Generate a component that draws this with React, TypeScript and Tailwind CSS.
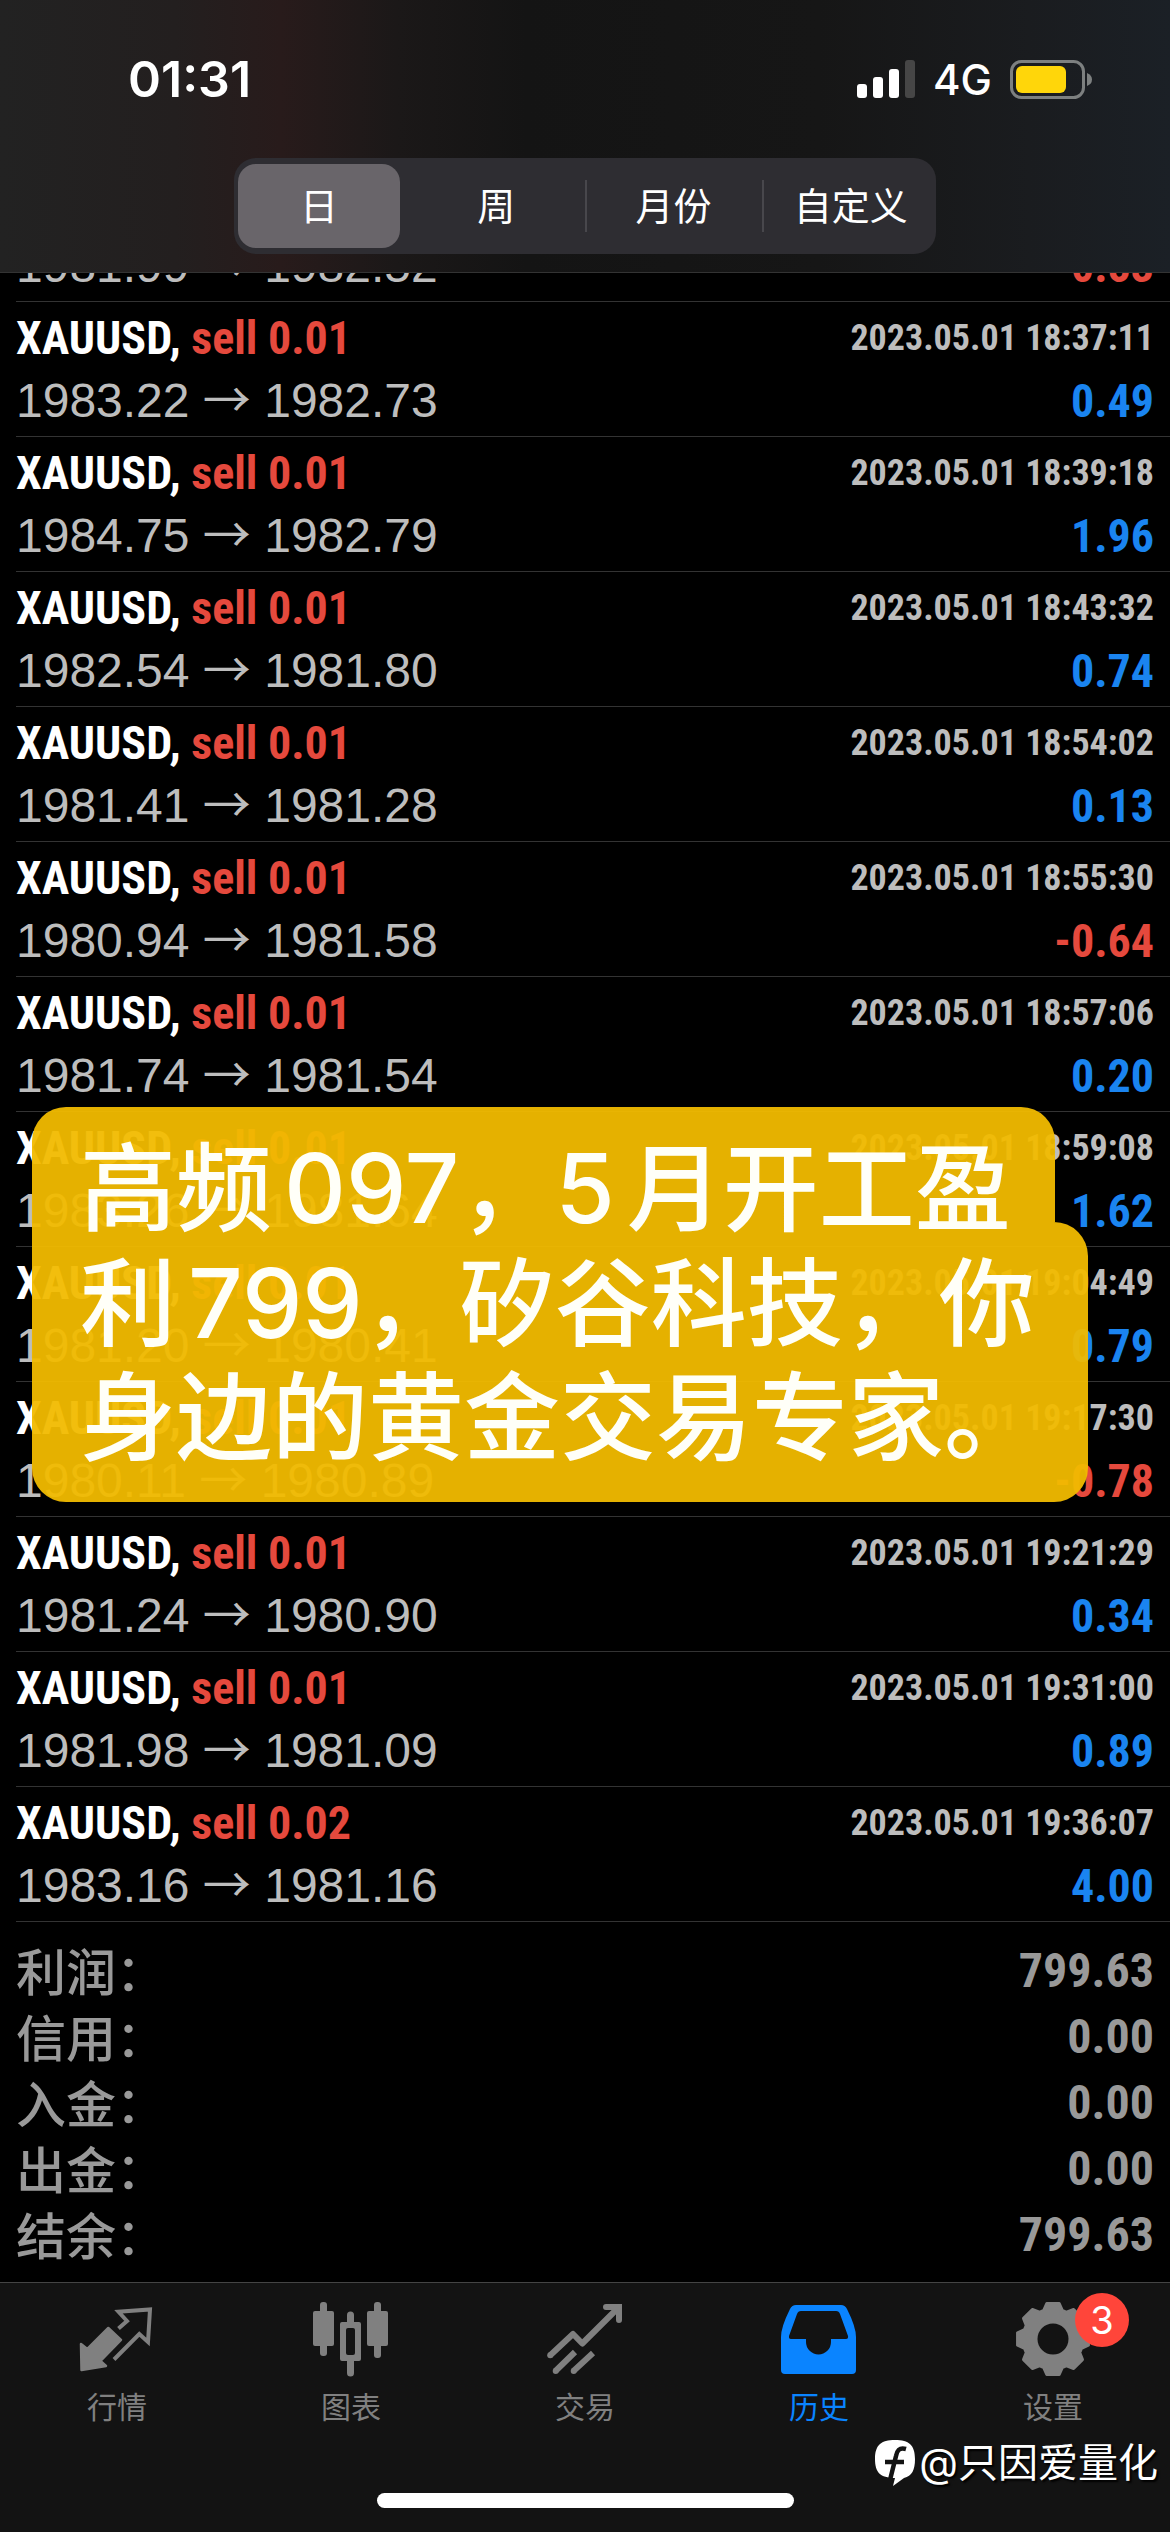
import React, { useState } from 'react';

interface Deal {
  volume: string;
  open: string;
  close: string;
  time: string;
  profit: string;
}

const DEALS: Deal[] = [
  { volume: '0.01', open: '1981.99', close: '1982.52', time: '2023.05.01 18:35:20', profit: '-0.53' },
  { volume: '0.01', open: '1983.22', close: '1982.73', time: '2023.05.01 18:37:11', profit: '0.49' },
  { volume: '0.01', open: '1984.75', close: '1982.79', time: '2023.05.01 18:39:18', profit: '1.96' },
  { volume: '0.01', open: '1982.54', close: '1981.80', time: '2023.05.01 18:43:32', profit: '0.74' },
  { volume: '0.01', open: '1981.41', close: '1981.28', time: '2023.05.01 18:54:02', profit: '0.13' },
  { volume: '0.01', open: '1980.94', close: '1981.58', time: '2023.05.01 18:55:30', profit: '-0.64' },
  { volume: '0.01', open: '1981.74', close: '1981.54', time: '2023.05.01 18:57:06', profit: '0.20' },
  { volume: '0.01', open: '1983.26', close: '1981.64', time: '2023.05.01 18:59:08', profit: '1.62' },
  { volume: '0.01', open: '1981.20', close: '1980.41', time: '2023.05.01 19:04:49', profit: '0.79' },
  { volume: '0.01', open: '1980.11', close: '1980.89', time: '2023.05.01 19:17:30', profit: '-0.78' },
  { volume: '0.01', open: '1981.24', close: '1980.90', time: '2023.05.01 19:21:29', profit: '0.34' },
  { volume: '0.01', open: '1981.98', close: '1981.09', time: '2023.05.01 19:31:00', profit: '0.89' },
  { volume: '0.02', open: '1983.16', close: '1981.16', time: '2023.05.01 19:36:07', profit: '4.00' },
];

const SUMMARY = [
  { label: '利润', value: '799.63' },
  { label: '信用', value: '0.00' },
  { label: '入金', value: '0.00' },
  { label: '出金', value: '0.00' },
  { label: '结余', value: '799.63' },
];

const PERIODS = ['日', '周', '月份', '自定义'];

// Outline of an eight-toothed cog, centred on 38,38
const gearPath = () => {
  const points: string[] = [];
  for (let i = 0; i < 8; i++) {
    for (const [angle, radius] of [[-18, 30], [-10, 36], [10, 36], [18, 30]]) {
      const a = ((i * 45 + angle) * Math.PI) / 180;
      points.push(`${(38 + radius * Math.cos(a)).toFixed(2)} ${(38 + radius * Math.sin(a)).toFixed(2)}`);
    }
  }
  return `M${points.join('L')}Z`;
};

const QuotesIcon = () => (
  <svg viewBox="0 0 76 76" className="size-[76px]" fill="none" stroke="currentColor">
    <path d="M2 43 8.300 48 29.300 27 42 39 21.500 60 27 65 2.500 69Z" fill="currentColor" strokeWidth="2.500" strokeLinejoin="round" />
    <path d="M39.500 27.500 48 20 39.500 10.800 71 8.500 69 41 60.300 33 35 58.500" strokeWidth="4" />
  </svg>
);

const ChartIcon = () => (
  <svg viewBox="0 0 76 76" className="size-[76px]" fill="currentColor">
    <rect x="0" y="10" width="21" height="35" rx="2" />
    <rect x="7" y="1" width="7" height="54" rx="3" />
    <path fillRule="evenodd" d="M29 21h17a2 2 0 0 1 2 2v35a2 2 0 0 1-2 2H29a2 2 0 0 1-2-2V23a2 2 0 0 1 2-2Zm6 6q-2 0-2 2v23q0 2 2 2h5q2 0 2-2V29q0-2-2-2Z" />
    <path d="M34 22v-8a3.500 3.500 0 0 1 7 0v8ZM34 59v13a3.500 3.500 0 0 0 7 0V59Z" />
    <rect x="54" y="10" width="21" height="35" rx="2" />
    <rect x="61" y="1" width="7" height="56" rx="3" />
  </svg>
);

const TradeIcon = () => (
  <svg viewBox="0 0 76 76" className="size-[76px]" fill="none" stroke="currentColor" strokeWidth="6">
    <path d="M3 54.500 26 33 35.300 42.500 71 7" strokeLinejoin="round" />
    <path d="M59 6H72V19" strokeLinecap="round" />
    <path d="M8.500 70 28 51M26.500 70 46 52" />
    <g fill="currentColor" stroke="none">
      <circle cx="3.200" cy="54.300" r="3" />
      <circle cx="8.700" cy="70" r="3" />
      <circle cx="26.700" cy="70" r="3" />
    </g>
  </svg>
);

const HistoryIcon = () => (
  <svg viewBox="0 0 76 76" className="size-[76px]" fill="currentColor">
    <path
      fillRule="evenodd"
      d="M15 4H60Q64 4 66 8Q75 26 75 36V69Q75 73 71 73H4Q0 73 0 69V36Q0 26 9 8Q11 4 15 4ZM20 10Q17 10 16 13L8 35Q7.500 38 10 38H25V41A12.500 12.500 0 0 0 50 41V38H65Q67.500 38 67 35L59 13Q58 10 55 10Z"
    />
  </svg>
);

const SettingsIcon = () => (
  <svg viewBox="0 0 76 76" className="size-[76px]" fill="currentColor">
    <path d={gearPath()} stroke="currentColor" strokeWidth="3" strokeLinejoin="round" />
    <circle cx="38" cy="38" r="15.500" fill="#131313" />
  </svg>
);

const TABS = [
  { label: '行情', icon: QuotesIcon },
  { label: '图表', icon: ChartIcon },
  { label: '交易', icon: TradeIcon },
  { label: '历史', icon: HistoryIcon },
  { label: '设置', icon: SettingsIcon, badge: 3 },
];

const StatusBar = () => (
  <div className="h-[158px] pl-32 pr-[78px] flex items-center justify-between font-['Inter',sans-serif] text-white">
    <span className="text-[50px] font-semibold">01:31</span>
    <div className="flex items-center gap-[18px]">
      <svg viewBox="0 0 58 38" className="w-[58px] h-[38px]" fill="#fff">
        <rect x="0" y="24" width="10" height="14" rx="3" />
        <rect x="16" y="17" width="10" height="21" rx="3" />
        <rect x="32" y="9" width="10" height="29" rx="3" />
        <rect x="48" y="0" width="10" height="38" rx="3" fill="#464646" />
      </svg>
      <span className="text-[42px] font-medium">4G</span>
      <svg viewBox="0 0 82 39" className="w-[82px] h-[39px]">
        <rect x="1.500" y="1.500" width="72" height="36" rx="10" fill="none" stroke="#7d8080" strokeWidth="3" />
        <rect x="6" y="6" width="50" height="27" rx="6" fill="#ffd60a" />
        <path d="M77 13Q82 15 82 19.500T77 26Z" fill="#7d8080" />
      </svg>
    </div>
  </div>
);

const DealRow: React.FC<{ deal: Deal }> = ({ deal }) => (
  <li className="shrink-0 pt-1 pb-1 pr-4 border-b border-[#333333]">
    <div className="h-[63px] flex items-center justify-between font-['Roboto_Condensed',sans-serif] font-bold">
      <span className="text-[46px] leading-none text-[#e5493d]">
        <span className="text-white">XAUUSD,</span> sell {deal.volume}
      </span>
      <time className="text-[36px] leading-none text-[#bdbdbd]">{deal.time}</time>
    </div>
    <div className="h-[63px] flex items-center justify-between">
      <span className="text-5xl text-[#bdbdbd] font-['Liberation_Sans',sans-serif]">
        {deal.open} <span className="font-['Noto_Sans_CJK_SC',sans-serif] leading-0">→</span> {deal.close}
      </span>
      <span
        className={`text-[46px] leading-none font-['Roboto_Condensed',sans-serif] font-bold ${
          deal.profit.startsWith('-') ? 'text-[#e5493d]' : 'text-[#1a84f0]'
        }`}
      >
        {deal.profit}
      </span>
    </div>
  </li>
);

const App: React.FC = () => {
  const [period, setPeriod] = useState('日');
  const [tab, setTab] = useState('历史');

  return (
    <div className="h-screen flex flex-col bg-black overflow-hidden font-['Inter','Noto_Sans_CJK_SC',sans-serif]">
      <header className="shrink-0 pb-[18px] border-b border-[#333333] bg-[linear-gradient(90deg,#222222_0%,#231f1f_15%,#281b1b_24%,#1b1818_34%,#141414_45%,#161616_70%,#1a1c1f_88%,#1b2026_100%)]">
        <StatusBar />
        {/* Period switch */}
        <div className="w-[60%] h-24 mx-auto px-1 py-[6px] grid grid-cols-4 gap-[15px] rounded-[22px] bg-[#2e2d32]">
          {PERIODS.map((name, i) => (
            <button
              key={name}
              onClick={() => setPeriod(name)}
              aria-pressed={period === name}
              className={`relative rounded-[18px] text-[38px] text-white whitespace-nowrap ${period === name ? 'bg-[#69656a]' : ''}`}
            >
              {i > 1 && <span className="absolute -left-2 top-4 bottom-4 w-[2px] bg-[#48474c]" />}
              {name}
            </button>
          ))}
        </div>
      </header>

      <main className="relative flex-1 min-h-0 flex flex-col justify-end overflow-hidden">
        <ul className="flex-1 min-h-0 pl-4 flex flex-col justify-end">
          {DEALS.map((deal) => (
            <DealRow key={deal.time} deal={deal} />
          ))}
        </ul>

        <dl className="shrink-0 h-[360px] px-4 pt-[14px] text-[#999999]">
          {SUMMARY.map((item) => (
            <div key={item.label} className="h-[66px] flex items-center justify-between">
              <dt className="text-[50px] font-medium font-['Noto_Sans_CJK_SC',sans-serif]">{item.label}：</dt>
              <dd className="pt-1 text-5xl font-bold font-['Roboto_Condensed',sans-serif]">{item.value}</dd>
            </div>
          ))}
        </dl>

        {/* Caption laid over the list, the first line is narrower than the rest */}
        <div className="absolute left-8 bottom-[780px] flex flex-col items-start text-[96px] leading-[114px] font-medium text-[#fffff8] whitespace-nowrap [text-autospace:normal]">
          <p className="relative z-10 h-[115px] pt-6 pl-12 pr-11 bg-[#f1ba00]/95 rounded-t-[34px]">高频097，5月开工盈</p>
          <p className="pt-6 pb-7 px-12 bg-[#f1ba00]/95 rounded-[34px] rounded-tl-none">
            利799，矽谷科技，你
            <br />
            身边的黄金交易专家。
          </p>
        </div>
      </main>

      <nav className="relative shrink-0 h-[250px] pt-[18px] pb-6 flex flex-col justify-between items-center border-t border-[#444444] bg-[#131313]">
        <div className="w-full grid grid-cols-5">
          {TABS.map(({ label, icon: Icon, badge }) => (
            <button
              key={label}
              onClick={() => setTab(label)}
              className={`flex flex-col items-center gap-3 ${tab === label ? 'text-[#0a84ff]' : 'text-[#808080]'}`}
            >
              <span className="relative">
                <Icon />
                {badge && (
                  <span className="absolute -top-2 -right-[38px] size-[54px] rounded-full bg-[#ff453a] text-white text-[38px] flex items-center justify-center">
                    {badge}
                  </span>
                )}
              </span>
              <span className="text-[30px] leading-9">{label}</span>
            </button>
          ))}
        </div>
        <div className="w-[417px] h-[15px] rounded-full bg-white" />

        {/* Author mark */}
        <div className="absolute right-3 bottom-10 flex items-center gap-1 text-[40px] leading-[58px] text-white text-shadow-[2px_2px_2px_#000]">
          <svg viewBox="0 0 40 46" className="w-10 h-[46px]" fill="none">
            <path d="M20 0C34 0 40 5 40 19C40 30 37 36 29 38L18 46L20 38C5 38 0 32 0 19C0 5 6 0 20 0Z" fill="#fff" />
            <path d="M31 9C24 7 22 11 21 16L15 40M10 22H29" stroke="#131313" strokeWidth="4.500" />
          </svg>
          <span>@只因爱量化</span>
        </div>
      </nav>
    </div>
  );
};

export default App;
